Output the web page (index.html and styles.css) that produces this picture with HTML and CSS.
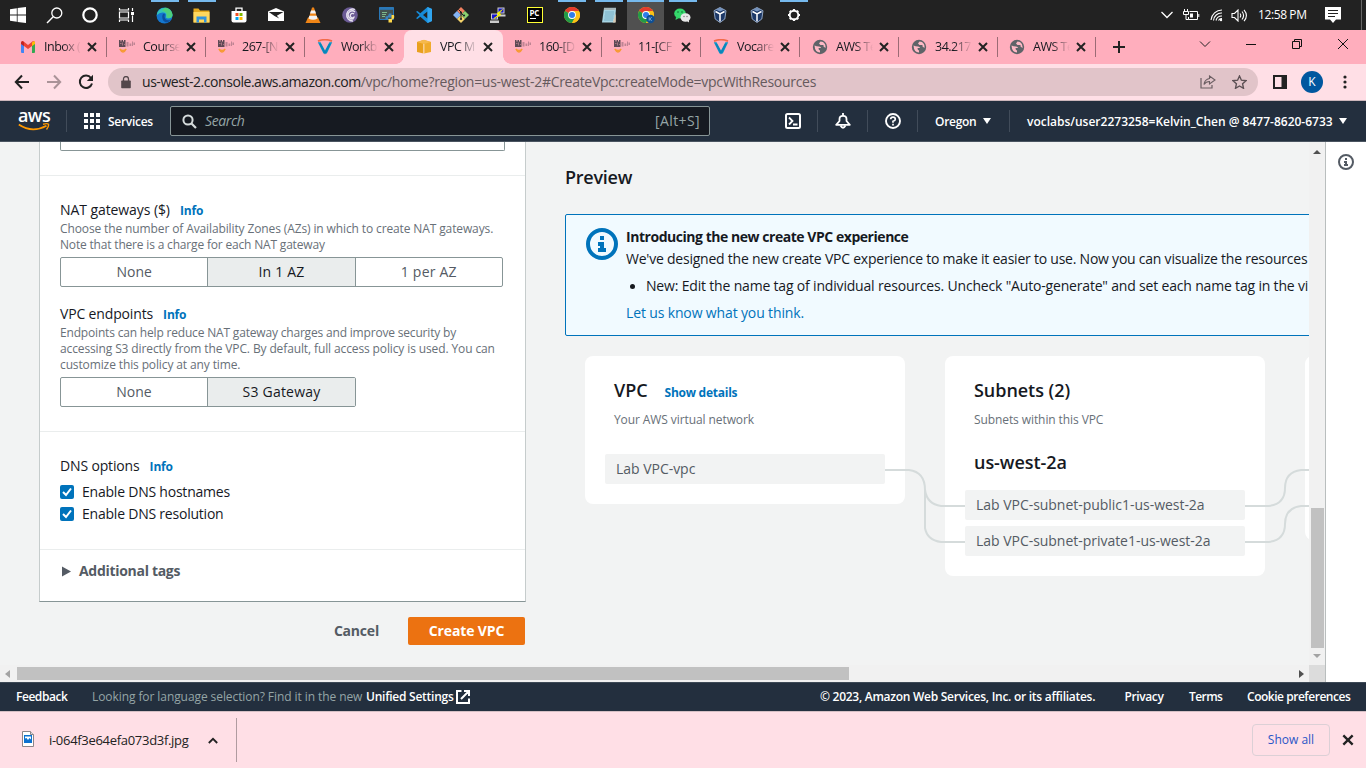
FILE: index.html
```html
<!DOCTYPE html>
<html lang="en">
<head>
<meta charset="utf-8">
<title>Create VPC</title>
<link rel="stylesheet" href="styles.css">
</head>
<body>
<svg class="defs" width="0" height="0">
  <symbol id="close" viewBox="0 0 12 12"><path d="M2 2l8 8M10 2l-8 8" stroke="currentColor" stroke-width="2" fill="none"/></symbol>
  <symbol id="canvas" viewBox="0 0 16 16"><path d="M0 1h1.500v1.500h1V1H4v1.500h1V1h1.500v7H0z" fill="#5e4a55"/><path d="M1 4.500h1.500M3.500 3.500v3M5 5.500h1.500" stroke="#b07a88" stroke-width=".9"/><path d="M7.500 3h2v4.500h-2zM10.500 4.500h1.800v2.500h-1.800zM13 2.500h1v4.500h-1zM14.500 3.500h1.500V6h-1.500z" fill="#a97585" opacity=".75"/><path d="M.8 10q3.200 6.500 6.400 0-3 3-6.400 0z" fill="#f79a35" stroke="#f79a35" stroke-width="1.200"/></symbol>
  <symbol id="voc" viewBox="0 0 16 16"><path d="M.8 3.200h2.800L8 11.500l4.400-8.300h2.800L9.800 14.500H6.500z" fill="#0a94c8"/><path d="M3.200 5L8 14l4.800-9" fill="none" stroke="#0a84b8" stroke-width="1.500"/><path d="M1 2.200Q8-.8 15 2.200" fill="none" stroke="#f36a4a" stroke-width="1.800"/></symbol>
  <symbol id="globe" viewBox="0 0 16 16"><circle cx="8" cy="8" r="7.200" fill="#5f6368"/><path d="M2.500 6.500q2 1 4.500 1 2 0 2 1.500H6.500q0 2 1.500 2.500v2Q3 13.500 2.500 6.500zM8.500 2.500L7 4.500l1.500 1.500h3v1.500l2 1.500q.5-4-2.500-6z" fill="#ffb8c5"/></symbol>
  <symbol id="chrome" viewBox="0 0 16 16"><circle cx="8" cy="8" r="8" fill="#fbc116"/><path d="M8 8L1.070 4A8 8 0 0 1 14.930 4z" fill="#e33b2e"/><path d="M8 8L1.070 4A8 8 0 0 0 8 16l3.400-6z" fill="#229a48"/><path d="M8 4h6.930A8 8 0 0 1 8 16l3.400-6z" fill="#fbc116"/><circle cx="8" cy="8" r="3.900" fill="#fff"/><circle cx="8" cy="8" r="3" fill="#2f7de9"/></symbol>
  <symbol id="vbox" viewBox="0 0 16 16"><path d="M8 .5l6 3.200L12.800 12 8 15.500 3.200 12 2 3.700z" fill="#1d3968" stroke="#8fa5c4" stroke-width="1"/><path d="M3.500 4.500L8 7l4.500-2.500M8 7v7.500" stroke="#fff" stroke-width="1.500" fill="none"/><path d="M4 2.800l4-2 4 2-4 1.700z" fill="#7694be"/></symbol>
  <symbol id="info" viewBox="0 0 32 32"><circle cx="16" cy="16" r="14" fill="none" stroke="currentColor" stroke-width="4"/><path d="M14 8h4v4h-4zM12 14h6v6h2v4h-8v-4h2v-2h-2z" fill="currentColor"/></symbol>
</svg>

<div class="taskbar">
  <div class="tb"><svg width="16" height="16" viewBox="0 0 16 16"><path d="M0 2.200L6.800 1.200V7.500H0zM7.600 1.100L16 0v7.500H7.600zM0 8.400h6.800v6.400L0 13.800zM7.600 8.400H16V16l-8.400-1.100z" fill="#fff"/></svg></div>
  <div class="tb"><svg width="17" height="17" viewBox="0 0 17 17"><circle cx="10.800" cy="6" r="5" fill="none" stroke="#fff" stroke-width="1.300"/><path d="M7.200 9.700L1 16" stroke="#fff" stroke-width="1.400"/></svg></div>
  <div class="tb"><svg width="16" height="16" viewBox="0 0 16 16"><circle cx="8" cy="8" r="6.700" fill="none" stroke="#fff" stroke-width="2.200"/></svg></div>
  <div class="tb"><svg width="17" height="16" viewBox="0 0 17 16"><path d="M1.500 1v2h9V1M1.500 15v-2h9v2M1.500 5h9v6h-9zM14.500 1v3M14.500 8.500V15" fill="none" stroke="#fff" stroke-width="1.200"/><path d="M13 5h3v3h-3z" fill="#fff"/></svg></div>
  <div class="app first on"><svg width="17" height="17" viewBox="0 0 17 17"><circle cx="8.500" cy="8.500" r="8" fill="#1477cf"/><path d="M1 6.500A8 8 0 0 1 16.500 7.500q.3 4-4.500 4-3.200-.3-2-2.300.8-3.700-3.500-3.700Q3 5.500 1 8z" fill="#35c5b5"/><path d="M9 .5a8 8 0 0 1 7.500 7q0 3.500-4 3.500-2-.2-1.800-1.300 1-5-4.500-6z" fill="#56d26a" opacity=".75"/><path d="M6.200 9.500q0 5.500 5 6 2-.5 3.800-2.800-6 2-6.500-3.500 1-2-.5-2.700-1.800.5-1.800 3z" fill="#0c4f9e"/></svg></div>
  <div class="app on"><svg width="17" height="15" viewBox="0 0 17 15"><path d="M.5.500h5l1.500 2h9.500v12H.5z" fill="#e5a91e"/><path d="M.5 4h16v10.500H.5z" fill="#ffd75e"/><path d="M3.500 14.500v-6h10v6H11v-3H6v3z" fill="#3293dc"/></svg></div>
  <div class="app"><svg width="16" height="16" viewBox="0 0 16 16"><path d="M5 4V1.200h6V4" fill="none" stroke="#fff" stroke-width="1.300"/><path d="M.5 4h15v9.500q0 2-2 2h-11q-2 0-2-2z" fill="#fff"/><path d="M4.500 6h3v3h-3z" fill="#f25022"/><path d="M8.500 6h3v3h-3z" fill="#7fba00"/><path d="M4.500 10h3v3h-3z" fill="#00a4ef"/><path d="M8.500 10h3v3h-3z" fill="#ffb900"/></svg></div>
  <div class="app"><svg width="16" height="14" viewBox="0 0 16 14"><path d="M0 3.500L8 0l8 3.500V13H0z" fill="#fff"/><path d="M.8 4h14.700L8.800 7.800l2.500 2.700L6.500 8z" fill="#222"/></svg></div>
  <div class="app"><svg width="16" height="17" viewBox="0 0 16 17"><path d="M3 10.500h10L15.500 16H.5z" fill="#f08516"/><path d="M7 .5h2L12.500 12q-4.500 3-9 0z" fill="#f08516"/><path d="M6 3.500h4l1 3H5zM4.300 8.800h7.400l.8 2.700q-4.500 2.500-9 0z" fill="#f3f3f3"/></svg></div>
  <div class="app"><svg width="16" height="16" viewBox="0 0 16 16"><circle cx="8" cy="8" r="7.800" fill="#6b5b95"/><path d="M13 2.500A6 6 0 1 0 11 14M13 5a4 4 0 1 0-1 6.500M12 7a2.200 2.200 0 1 0 .5 2.500" fill="none" stroke="#e8e4f0" stroke-width="1.300"/></svg></div>
  <div class="app"><svg width="16" height="16" viewBox="0 0 16 16"><path d="M.5.500h14v12H.5z" fill="#44514f" stroke="#2a78b8"/><path d="M.5.500h14v2.300H.5z" fill="#2a78b8"/><path d="M3 5.500h5M3 7.500h4M3 9.500h3" stroke="#7db88a"/><path d="M10 6.500h2.500v4H9v2H6.500v-3L9 9z" fill="#3b82bd"/><path d="M12.500 8h2.500q1 4-2 4.500v3h-3.500V12h3z" fill="#ffd94a"/></svg></div>
  <div class="app"><svg width="16" height="16" viewBox="0 0 16 16"><path d="M11.500 0L16 2v12l-4.500 2L4.300 9.700 1.500 12 0 11.200 3.500 8 0 4.800 1.500 4l2.800 2.300zM11.500 4.500L7 8l4.500 3.500z" fill="#168bd8"/><path d="M11.500 0L16 2v12l-4.500 2z" fill="#30a5ef"/></svg></div>
  <div class="app"><svg width="16" height="16" viewBox="0 0 16 16"><path d="M8 0l4 4-4 4-4-4z" fill="#f08060"/><path d="M4 4l4 4-4 4-4-4z" fill="#85b4f4"/><path d="M12 4l4 4-4 4-4-4z" fill="#8bd070"/><path d="M8 8l4 4-4 4-4-4z" fill="#f5d36a"/><path d="M5.500 2.500L8 5v7M8 6l3 3" stroke="#222" fill="none"/><circle cx="8" cy="5.500" r="1.100" fill="#222"/><circle cx="8" cy="12" r="1.100" fill="#222"/><circle cx="11" cy="8.500" r="1.100" fill="#222"/></svg></div>
  <div class="app"><svg width="16" height="16" viewBox="0 0 16 16"><path d="M7.500.5h7v6h-7zM6.500 7.500h9v2h-9z" fill="#d0d0d0"/><path d="M8.500 1.500h5v4h-5z" fill="#1616d0"/><path d="M1 6.500h7v6H1zM0 13.500h9V16H0z" fill="#ccc"/><path d="M2 7.500h5v4H2z" fill="#1616d0"/><path d="M12.500 2.500L7 6.500l2 1L4 11.500l7-4-2-1z" fill="#ff0" stroke="#ee0" stroke-width=".8"/></svg></div>
  <div class="app"><span class="pc">PC</span></div>
  <div class="app on"><svg width="16" height="16"><use href="#chrome"/></svg></div>
  <div class="app on"><svg width="16" height="16" viewBox="0 0 16 16"><path d="M3 1h12l-1 14.500H1z" fill="#a7d5e4"/><path d="M3 1h12v2H3z" fill="#dcebef"/><path d="M4 5h9M4 7h9M3.500 9h9M3.500 11h9M3 13h9" stroke="#6ba6be" stroke-width=".8"/><path d="M4 0v3M6 0v3M8 0v3M10 0v3M12 0v3M14 0v3" stroke="#65777e" stroke-width=".9"/><path d="M14.800 6v9.500h-3z" fill="#d8c9b4"/></svg></div>
  <div class="app on active"><svg width="18" height="17" viewBox="0 0 18 17"><use href="#chrome" x="1" y="0" width="16" height="16"/><circle cx="13.500" cy="12" r="4.200" fill="#0e4f94"/><path d="M12.200 10.300v3.400M14.700 10.300L12.700 12l2 1.700" stroke="#9cc3e8" fill="none" stroke-width=".8"/></svg></div>
  <div class="app on"><svg width="17" height="16" viewBox="0 0 17 16"><ellipse cx="6" cy="6.500" rx="5.800" ry="5" fill="#35d86b"/><path d="M2 10l-.5 3L5 11z" fill="#35d86b"/><ellipse cx="11.500" cy="10.500" rx="5" ry="4.200" fill="#e8e8e8"/><path d="M13 14l2 1.500V13z" fill="#e8e8e8"/><circle cx="4" cy="5" r=".8" fill="#116b35"/><circle cx="8" cy="5" r=".8" fill="#116b35"/><circle cx="10" cy="9.500" r=".7" fill="#777"/><circle cx="13" cy="9.500" r=".7" fill="#777"/></svg></div>
  <div class="app"><svg width="16" height="16"><use href="#vbox"/></svg></div>
  <div class="app"><svg width="16" height="16"><use href="#vbox"/></svg></div>
  <div class="app on"><svg width="14" height="14" viewBox="0 0 14 14"><circle cx="7" cy="7" r="4.300" fill="none" stroke="#fff" stroke-width="1.900"/><path d="M7 1v1.500M7 11.500V13M1 7h1.500M11.500 7H13M2.800 2.800l1 1M10.200 10.200l1 1M11.200 2.800l-1 1M3.800 10.200l-1 1" stroke="#fff" stroke-width="2.200"/></svg></div>
  <div class="tray">
    <svg class="t-chev" width="12" height="8" viewBox="0 0 12 8"><path d="M.5 1L6 6.500 11.500 1" fill="none" stroke="#fff" stroke-width="1.300"/></svg>
    <svg class="t-bat" width="17" height="12" viewBox="0 0 17 12"><path d="M6.500 2.500h8v8h-9V8M15.800 5v3M1.500 0v2M4.500 0v2M.5 2.500h5v3h-5zM3 5.500v5h2.500" fill="none" stroke="#fff"/><path d="M7 4.500h3v4H7z" fill="#fff"/></svg>
    <svg class="t-wifi" width="13" height="14" viewBox="0 0 13 14"><path d="M1 12A11 11 0 0 1 12 2M3.500 12.500A8 8 0 0 1 12 5M6 12.500A6 6 0 0 1 12 8M8.500 12.500A3.500 3.500 0 0 1 12 10.500" fill="none" stroke="#fff" stroke-width="1.100"/><circle cx="11" cy="12" r="1.200" fill="#fff"/></svg>
    <svg class="t-vol" width="17" height="13" viewBox="0 0 17 13"><path d="M1 4.500h2.500L7 1v11L3.500 8.500H1zM9 4.500q1.500 2 0 4M11 2.500q3.200 4 0 8M13 .8q4.800 5.700 0 11.400" fill="none" stroke="#fff" stroke-width="1.100"/></svg>
    <span class="clock">12:58 PM</span>
    <svg class="t-note" width="16" height="16" viewBox="0 0 16 16"><path d="M0 0h16v12.500h-5L8 16l-3-3.500H0z" fill="#fff"/><path d="M3 3.500h10M3 6.500h10M3 9.500h7" stroke="#222"/></svg>
    <i class="t-line"></i>
  </div>
</div>

<div class="tabs">
  <div class="tab"><svg class="fav" viewBox="0 0 16 16"><path d="M1 3.500h3V14H2q-1 0-1-1z" fill="#4285f4"/><path d="M12 3.500h3V13q0 1-1 1h-2z" fill="#34a853"/><path d="M1 4q0-2 2-2l5 4 5-4q2 0 2 2l-3 3-4 3-4-3z" fill="#ea4335"/><path d="M12 3.500l2-1.500q1.500.5 1 3l-3 2z" fill="#fbbc04"/><path d="M1 4.200Q1 2.500 2.500 2L4 3.500V7L1 5z" fill="#c5221f"/></svg><span class="tt">Inbox (</span><svg class="x"><use href="#close"/></svg></div>
  <div class="tab"><svg class="fav"><use href="#canvas"/></svg><span class="tt">Course</span><svg class="x"><use href="#close"/></svg></div>
  <div class="tab"><svg class="fav"><use href="#canvas"/></svg><span class="tt">267-[N</span><svg class="x"><use href="#close"/></svg></div>
  <div class="tab nosep"><svg class="fav"><use href="#voc"/></svg><span class="tt">Workb</span><svg class="x"><use href="#close"/></svg></div>
  <div class="tab nosep current"><svg class="fav" viewBox="0 0 16 16"><path d="M1 3l6.500-2v13.500L1 13z" fill="#e9a01e"/><path d="M8 1L15 3v10l-7 1.500z" fill="#f0ab2c"/><path d="M1 3l7-2.200L15 3 8 5z" fill="#f6b94c"/><path d="M8 5v9.500" stroke="#ffe1b0" stroke-width=".8"/></svg><span class="tt">VPC M</span><svg class="x"><use href="#close"/></svg></div>
  <div class="tab"><svg class="fav"><use href="#canvas"/></svg><span class="tt">160-[D</span><svg class="x"><use href="#close"/></svg></div>
  <div class="tab"><svg class="fav"><use href="#canvas"/></svg><span class="tt">11-[CF</span><svg class="x"><use href="#close"/></svg></div>
  <div class="tab"><svg class="fav"><use href="#voc"/></svg><span class="tt">Vocare</span><svg class="x"><use href="#close"/></svg></div>
  <div class="tab"><svg class="fav"><use href="#globe"/></svg><span class="tt">AWS Te</span><svg class="x"><use href="#close"/></svg></div>
  <div class="tab"><svg class="fav"><use href="#globe"/></svg><span class="tt">34.217</span><svg class="x"><use href="#close"/></svg></div>
  <div class="tab last"><svg class="fav"><use href="#globe"/></svg><span class="tt">AWS Te</span><svg class="x"><use href="#close"/></svg></div>
  <svg class="plus" width="12" height="12" viewBox="0 0 12 12"><path d="M6 0v12M0 6h12" stroke="#222" stroke-width="2"/></svg>
  <div class="wc">
    <svg viewBox="0 0 12 12"><path d="M1 3.500l5 5 5-5" fill="none" stroke="#222"/></svg>
    <svg viewBox="0 0 12 12"><path d="M1 6.500h10" stroke="#111"/></svg>
    <svg viewBox="0 0 12 12"><path d="M1.500 3.500h7v7h-7zM3.500 3.500v-2h7v7h-2" fill="none" stroke="#111"/></svg>
    <svg viewBox="0 0 12 12"><path d="M1 1l10 10M11 1L1 11" stroke="#111"/></svg>
  </div>
</div>

<div class="toolbar">
  <svg class="nav" viewBox="0 0 16 16"><path d="M15 8H2M8 1.500L1.800 8 8 14.500" fill="none" stroke="#222" stroke-width="2"/></svg>
  <svg class="nav" viewBox="0 0 16 16"><path d="M1 8h13M8 1.500L14.200 8 8 14.500" fill="none" stroke="#aa9398" stroke-width="2"/></svg>
  <svg class="nav" viewBox="0 0 16 16"><path d="M13 4A6.200 6.200 0 1 0 14 9.500" fill="none" stroke="#222" stroke-width="2"/><path d="M15 .8V7H8.800z" fill="#222"/></svg>
  <div class="omni">
    <svg width="10" height="13" viewBox="0 0 10 13"><path d="M1 4.500h8q.8 0 .8.800v6.200q0 .8-.8.800H1q-.8 0-.8-.8V5.300q0-.8.800-.8z" fill="#54474b"/><path d="M2.500 5V3a2.500 2.500 0 0 1 5 0v2" fill="none" stroke="#54474b" stroke-width="1.300"/></svg>
    <span class="host">us-west-2.console.aws.amazon.com</span><span class="path">/vpc/home?region=us-west-2#CreateVpc:createMode=vpcWithResources</span>
    <svg class="share" width="16" height="14" viewBox="0 0 16 14"><path d="M1 3v10h11v-3" fill="none" stroke="#6b5e62" stroke-width="1.200"/><path d="M9.500 1l5.500 4-5.500 4V6.500Q6 6.500 4 9.500q.5-5 5.500-6z" fill="none" stroke="#6b5e62" stroke-width="1.100"/></svg>
    <svg width="15" height="14" viewBox="0 0 15 14"><path d="M7.500 1l1.900 4.200 4.600.5-3.400 3.100.9 4.500-4-2.300-4 2.300.9-4.500L1 5.700l4.600-.5z" fill="none" stroke="#5c5054" stroke-width="1.400"/></svg>
  </div>
  <svg class="side" width="14" height="14" viewBox="0 0 14 14"><path d="M1 1h12v12H1z" fill="none" stroke="#222" stroke-width="2"/><path d="M8.500 1H13v12H8.500z" fill="#222"/></svg>
  <span class="avatar">K</span>
  <svg class="dots" width="4" height="14" viewBox="0 0 4 14"><circle cx="2" cy="2" r="1.600"/><circle cx="2" cy="7" r="1.600"/><circle cx="2" cy="12" r="1.600"/></svg>
</div>

<header class="aws">
  <div class="logo"><span>aws</span><svg width="32" height="9" viewBox="0 0 32 9"><path d="M.8 1.500Q14 10.500 28.500 2.700" fill="none" stroke="#f90" stroke-width="1.700"/><path d="M25 1.200q4.500-1 5.500 0 .5 2.300-2 5.300" fill="none" stroke="#f90" stroke-width="1.400"/></svg></div>
  <i class="vsep"></i>
  <svg class="grid" width="16" height="16" viewBox="0 0 16 16"><path d="M0 0h4v4H0zM6 0h4v4H6zM12 0h4v4h-4zM0 6h4v4H0zM6 6h4v4H6zM12 6h4v4h-4zM0 12h4v4H0zM6 12h4v4H6zM12 12h4v4h-4z" fill="#fff"/></svg>
  <span class="hb svc">Services</span>
  <div class="search"><svg width="15" height="15" viewBox="0 0 15 15"><circle cx="6" cy="6" r="4.600" fill="none" stroke="#d5dbdb" stroke-width="2"/><path d="M9.500 9.500L14 14" stroke="#d5dbdb" stroke-width="2.200"/></svg><em>Search</em><span>[Alt+S]</span></div>
  <svg class="h1" width="16" height="16" viewBox="0 0 16 16"><rect x="1" y="1" width="14" height="14" rx="1.500" fill="none" stroke="#fff" stroke-width="2"/><path d="M4 4.500L7.500 8 4 11.500M8 11.500h4.500" fill="none" stroke="#fff" stroke-width="1.800"/></svg>
  <i class="vsep v1"></i>
  <svg class="h2" width="16" height="16" viewBox="0 0 16 16"><path d="M1.200 11.800h13.600L11.500 8V6Q11.500 2.800 8 2.800T4.500 6v2z" fill="none" stroke="#fff" stroke-width="1.800" stroke-linejoin="round"/><path d="M8 0v3M5.500 12.500q2.500 4.500 5 0" fill="none" stroke="#fff" stroke-width="1.800"/></svg>
  <i class="vsep v2"></i>
  <svg class="h3" width="16" height="16" viewBox="0 0 16 16"><circle cx="8" cy="8" r="7" fill="none" stroke="#fff" stroke-width="1.900"/><path d="M5.700 6.300q0-2.200 2.300-2.200t2.300 2.100Q10.300 7.700 8 8.300v1.500M8 10.800v1.700" fill="none" stroke="#fff" stroke-width="1.700"/></svg>
  <i class="vsep v3"></i>
  <span class="hb ore">Oregon</span><i class="caret"></i>
  <i class="vsep v4"></i>
  <span class="hb usr">voclabs/user2273258=Kelvin_Chen @ 8477-8620-6733</span><i class="caret c2"></i>
</header>

<div class="work">
  <div class="scroller">
    <div class="view">
      <section class="left">
        <div class="panel">
          <div class="input"></div>
          <div class="sec s1">
            <div class="lab"><span class="l-nat">NAT gateways ($)</span><a>Info</a></div>
            <p class="d"><span class="d1">Choose the number of Availability Zones (AZs) in which to create NAT gateways.</span><span class="d2">Note that there is a charge for each NAT gateway</span></p>
            <div class="seg"><b>None</b><b class="sel k1">In 1 AZ</b><b class="k2">1 per AZ</b></div>
            <div class="lab l2"><span>VPC endpoints</span><a>Info</a></div>
            <p class="d"><span class="d2">Endpoints can help reduce NAT gateway charges and improve security by</span><span class="d1">accessing S3 directly from the VPC. By default, full access policy is used. You can</span><span class="d1">customize this policy at any time.</span></p>
            <div class="seg two"><b>None</b><b class="sel k1">S3 Gateway</b></div>
          </div>
          <div class="sec s2">
            <div class="lab"><span>DNS options</span><a>Info</a></div>
            <div class="chk"><svg viewBox="0 0 14 14"><path d="M3 7l3 3 5-6.500" fill="none" stroke="#fff" stroke-width="2"/></svg>Enable DNS hostnames</div>
            <div class="chk"><svg viewBox="0 0 14 14"><path d="M3 7l3 3 5-6.500" fill="none" stroke="#fff" stroke-width="2"/></svg>Enable DNS resolution</div>
          </div>
          <div class="sec s3"><svg width="9" height="11" viewBox="0 0 9 11"><path d="M0 .5l9 5-9 5z" fill="#545b64"/></svg>Additional tags</div>
        </div>
        <div class="actions"><span class="cancel">Cancel</span><span class="create">Create VPC</span></div>
      </section>
      <section class="right">
        <h2>Preview</h2>
        <div class="alert">
          <svg width="32" height="32"><use href="#info"/></svg>
          <div class="at">
            <strong>Introducing the new create VPC experience</strong>
            <span class="a1">We've designed the new create VPC experience to make it easier to use. Now you can visualize the resources</span>
            <span class="a2">New: Edit the name tag of individual resources. Uncheck "Auto-generate" and set each name tag in the vi</span>
            <span class="a3">Let us know what you think.</span>
          </div>
        </div>
        <div class="map">
          <div class="card">
            <div class="ct">VPC<a>Show details</a></div>
            <div class="cs">Your AWS virtual network</div>
            <div class="chip top">Lab VPC-vpc</div>
          </div>
          <div class="card">
            <div class="ct">Subnets (2)</div>
            <div class="cs s">Subnets within this VPC</div>
            <div class="ct az">us-west-2a</div>
            <div class="chip">Lab VPC-subnet-public1-us-west-2a</div>
            <div class="chip">Lab VPC-subnet-private1-us-west-2a</div>
          </div>
          <div class="card third"></div>
          <svg class="wires" width="724" height="220" viewBox="0 0 724 220"><path d="M300 114h24q16 2 16 20v38q2 12 16 14h24M340 134q2 14 16 16h24M660 150h24q16-2 16-18t16-18h10M660 186h24q16-2 16-18t16-18h10" fill="none" stroke="#d5dbdb" stroke-width="2"/></svg>
        </div>
      </section>
    </div>
    <div class="vbar"><i class="up"></i><i class="vthumb"></i><i class="down"></i></div>
    <div class="hbar"><i class="lt"></i><i class="hthumb"></i><i class="rt"></i></div>
    <div class="corner"></div>
  </div>
  <aside><svg width="16" height="16"><use href="#info"/></svg></aside>
</div>

<footer>
  <span class="f1">Feedback</span><span class="f2">Looking for language selection? Find it in the new</span><span class="f3">Unified Settings</span>
  <svg width="14" height="14" viewBox="0 0 14 14"><path d="M5.500 1H1v12h12V8.500M8 1h5v5M12.500 1.500L5 9" fill="none" stroke="#fff" stroke-width="2"/></svg>
  <span class="f4">© 2023, Amazon Web Services, Inc. or its affiliates.</span><span class="f5">Privacy</span><span class="f6">Terms</span><span class="f7">Cookie preferences</span>
</footer>

<div class="dl">
  <svg class="file" width="12" height="16" viewBox="0 0 12 16"><path d="M.5.500h8l3 3v12H.5z" fill="#fff" stroke="#8d8588"/><path d="M8.500.500v3h3" fill="#ddd" stroke="#8d8588"/><path d="M2 4h8v8H2z" fill="#0d72d0"/><path d="M3 5.500h6v3L7.500 7 6 9 4.500 7 3 7.500z" fill="#fff"/></svg>
  <span class="fn">i-064f3e64efa073d3f.jpg</span>
  <svg class="dc" width="10" height="7" viewBox="0 0 10 7"><path d="M.8 6L5 1.800 9.200 6" fill="none" stroke="#222" stroke-width="1.800"/></svg>
  <i class="dsep"></i>
  <span class="all">Show all</span>
  <svg class="dx" width="14" height="14"><use href="#close"/></svg>
</div>
</body>
</html>
```
FILE: styles.css
```css
*{box-sizing:border-box}
body{margin:0;width:1366px;height:768px;overflow:hidden;font:14px/22px "Open Sans","Noto Sans",sans-serif;color:#16191f;white-space:nowrap;background:#f2f3f3}
svg{display:block;flex:none}
i{display:block;flex:none}
.defs{position:absolute}

/* taskbar */
.taskbar{height:30px;background:#222;display:flex}
.tb,.app{width:36px;height:30px;display:flex;align-items:center;justify-content:center;flex:none}
.app{width:37px;background:linear-gradient(#76b9ed,#76b9ed) 50% 0/0 2px no-repeat}
.first{margin-left:2px}
.on{background-size:28px 2px}
.active{background-color:#505050;background-size:37px 2px}
.pc{width:16px;height:16px;border:1px solid #ff3;background:#000;color:#fff;font:700 8px/9px "Open Sans",sans-serif;padding-left:2px;letter-spacing:-.3px}
.pc::after{content:"";display:block;width:6px;height:1px;background:#fff;margin-top:1px}
.tray{margin-left:auto;display:flex;align-items:center;color:#fff}
.t-bat{margin-left:10px}
.t-wifi{margin-left:10px}
.t-vol{margin-left:8px}
.clock{margin-left:10px;width:49px;font-size:12px;letter-spacing:-.4px}
.t-note{margin-left:18px}
.t-line{margin:0 4px 0 20px;width:1px;height:30px;background:#666}

/* tab strip */
.tabs{height:34px;background:#ffaebd;display:flex;padding-left:8px}
.tab{position:relative;width:99px;height:34px;display:flex;align-items:center;padding-left:12px;flex:none}
.tab::after{content:"";position:absolute;right:0;top:7px;width:1px;height:20px;background:#9b6b75}
.nosep::after{display:none}
.last{width:98px;padding-left:11px}
.current{background:#ffdfe6;border-radius:8px 8px 0 0}
.current::after{display:block;right:-8px;top:26px;width:8px;height:8px;background:radial-gradient(circle at 8px 0,transparent 7.500px,#ffdfe6 8px)}
.current::before{content:"";position:absolute;left:-8px;top:26px;width:8px;height:8px;background:radial-gradient(circle at 0 0,transparent 7.500px,#ffdfe6 8px)}
.fav{width:16px;height:16px}
.tt{margin-left:8px;width:37px;overflow:hidden;font-size:12.500px;letter-spacing:-.5px;line-height:20px;-webkit-mask-image:linear-gradient(90deg,#000 50%,transparent);mask-image:linear-gradient(90deg,#000 50%,transparent)}
.x{width:12px;height:12px;margin-left:5px;color:#222}
.plus{margin:11px 0 0 17px}
.wc{display:flex;gap:34px;margin:8px 17px 0 auto}
.wc svg{width:12px;height:12px}

/* toolbar */
.toolbar{height:37px;background:#ffdfe6;border-bottom:1px solid #cdb7bc;display:flex;align-items:center;padding-left:14px}
.nav{width:16px;height:16px;margin-right:16px}
.omni{margin-left:-2px;width:1150px;height:28px;border-radius:14px;background:#e1c4c9;display:flex;align-items:center;padding:0 11px 0 13px}
.host{margin-left:11px;letter-spacing:-.45px;font-size:14px;color:#222}
.path{color:#665a5d;letter-spacing:-.29px}
.share{margin:0 16px 0 auto}
.side{margin-left:15px}
.avatar{margin-left:14px;width:22px;height:22px;border-radius:11px;background:#00579f;color:#fff;font-size:12px;text-align:center}
.dots{margin-left:20px;fill:#222}

/* console header */
.aws{height:41px;background:#232f3e;border-bottom:1px solid #4a5460;display:flex;align-items:center;color:#fff}
.logo{margin-left:18px;width:32px;height:24px}
.logo span{display:block;font:600 18px/14px "Open Sans",sans-serif;letter-spacing:-.6px;margin-top:-1px;height:15px;text-align:center}
.vsep{width:1px;height:22px;background:#414c5a}
.logo+.vsep{margin-left:16px}
.grid{margin-left:17px}
.hb{font-size:12px;font-weight:600;padding-top:1px}
.svc{margin-left:8px;width:62px;letter-spacing:-.28px}
.search{width:540px;height:30px;border:1px solid #879596;background:#161a21;border-radius:2px;display:flex;align-items:center;padding:0 9px 0 11px;color:#95a5a6;font-size:14px}
.search em{margin-left:8px;letter-spacing:-.39px}
.search span{margin-left:auto;letter-spacing:.4px}
.h1{margin-left:75px}
.v1{margin-left:16px}
.h2{margin-left:17px}
.v2{margin-left:16px}
.h3{margin-left:17px}
.v3{margin-left:16px}
.ore{margin-left:17px;width:48px;letter-spacing:-.3px}
.caret{border:4px solid transparent;border-top:6px solid #fff;border-bottom:0}
.v4{margin-left:18px}
.usr{margin-left:17px;width:312px}

/* work area */
.work{display:flex;height:540px}
.scroller{width:1325px;height:540px;display:grid;grid-template-columns:1309px 16px;grid-template-rows:523px 17px;flex:none}
.view{overflow:hidden;display:flex;background:#f2f3f3}
.left{width:487px;margin-left:39px;flex:none}
.panel{height:460px;background:#fff;border:1px solid #c6cccc;border-top:0;border-bottom-color:#879596}
.input{height:9px;width:445px;margin-left:20px;border:1px solid #879596;border-top:0;border-radius:0 0 2px 2px}
.sec{border-top:1px solid #eaeded;padding:23px 20px 0}
.s1{margin-top:24px;height:256px}
.s2{height:118px}
.lab{display:flex;line-height:22px;letter-spacing:-.15px}
.lab a{margin-left:10px;color:#0073bb;font-size:12px;font-weight:700;padding-top:1px;height:22px}
.l-nat{letter-spacing:-.08px}
.d{margin:0;font-size:12px;line-height:16px;color:#687078}
.d span{display:block}
.d1{letter-spacing:-.12px}
.d2{letter-spacing:-.18px}
.seg{display:flex;margin-top:4px;width:443px;height:30px;border:1px solid #879596;border-radius:2px}
.seg b{flex:1;font-weight:400;text-align:center;line-height:28px;color:#545b64}
.seg b+b{border-left:1px solid #879596}
.seg .sel{background:#eaeded;color:#16191f}
.k1,.k2{letter-spacing:.22px}
.two{width:296px}
.seg.two b:first-child{flex:0 0 146px}
.l2{margin-top:16px}
.chk{display:flex;align-items:center;gap:8px;letter-spacing:-.22px}
.s2 .lab{margin-bottom:4px}
.chk svg{width:14px;height:14px;background:#0073bb;border-radius:2px}
.s3{display:flex;align-items:center;gap:8px;padding:10px 22px 0;font-weight:700;color:#545b64;letter-spacing:-.3px}
.actions{display:flex;justify-content:flex-end;margin:15px 1px 0 0;font-weight:700;line-height:28px}
.cancel{color:#545b64;margin-right:29px;letter-spacing:-.2px}
.create{background:#ec7211;color:#fff;width:117px;text-align:center;border-radius:2px;letter-spacing:-.12px}
.right{margin-left:39px;flex:none;width:900px}
h2{margin:24px 0 0;font-size:18px;line-height:22px;font-weight:600;letter-spacing:-.25px}
.alert{margin-top:26px;height:122px;border:1px solid #0073bb;border-radius:2px;background:#f1faff;display:flex;padding:11px 20px;color:#0073bb}
.alert svg{margin-top:2px}
.at{margin-left:8px;color:#16191f}
.at strong,.at span{display:block;line-height:22px}
.at strong{letter-spacing:-.46px}
.a1{letter-spacing:-.23px}
.at .a2{letter-spacing:-.18px;margin:5px 0;padding-left:20px;position:relative}
.a2::before{content:"";position:absolute;left:4px;top:9px;width:5px;height:5px;border-radius:3px;background:#16191f}
.at .a3{color:#0073bb;letter-spacing:-.14px}
.map{position:relative;display:flex;align-items:flex-start;gap:40px;margin:20px 0 0 20px}
.card{width:320px;background:#fff;border-radius:8px;padding:23px 20px 20px;flex:none}
.third{height:184px}
.ct{margin-left:9px;height:22px;font-size:18px;font-weight:600;line-height:22px;letter-spacing:-.05px}
.ct a{color:#0073bb;font-size:12px;font-weight:700;margin-left:17px;letter-spacing:-.25px}
.cs{margin:8px 0 0 9px;font-size:12px;color:#687078;letter-spacing:-.09px}
.az{margin-top:20px;margin-bottom:17px}
.chip{height:30px;line-height:30px;background:#f2f3f3;border-radius:2px;padding-left:11px;color:#545b64;letter-spacing:-.03px}
.chip+.chip{margin-top:6px}
.top{margin-top:23px}
.wires{position:absolute;left:0;top:0}
.vbar{background:#f1f1f1;display:flex;flex-direction:column;align-items:center}
.up{margin-top:8px;border:4px solid transparent;border-bottom:4px solid #505050;border-top:0}
.vthumb{margin-top:354px;width:13px;height:140px;background:#c1c1c1}
.down{margin-top:6px;border:4px solid transparent;border-top:4px solid #a3a3a3;border-bottom:0}
.hbar{background:#f1f1f1;display:flex;align-items:center}
.lt{margin-left:5px;border:4px solid transparent;border-right:5px solid #a3a3a3;border-left:0}
.hthumb{margin-left:7px;width:832px;height:13px;background:#c1c1c1}
.rt{margin-left:450px;border:4px solid transparent;border-left:5px solid #505050;border-right:0}
.corner{background:#dcdcdc}
aside{width:41px;background:#fff;border-left:1px solid #b9bebe;padding:12px 0 0 12px;color:#545b64}

/* console footer */
footer{height:29px;background:#232f3e;border-top:1px solid #3d4956;display:flex;align-items:center;color:#fff;font-size:12px;font-weight:600}
.f1{margin-left:16px;width:76px;letter-spacing:-.45px}
.f2{width:274px;color:#95a5a6;font-weight:400;letter-spacing:-.08px}
.f3{width:90px;letter-spacing:-.25px}
.f4{margin-left:350px;width:304.500px;letter-spacing:-.27px}
.f5{width:64.500px;letter-spacing:-.38px}
.f6{width:58px;letter-spacing:-.55px}
.f7{letter-spacing:-.47px}

/* download shelf */
.dl{height:57px;background:#ffdfe6;border-top:1px solid #d5bfc4;display:flex;align-items:center;color:#222}
.file{margin:0 0 2px 22px}
.fn{margin-left:15px;width:159px;font-size:13px;letter-spacing:-.3px}
.dsep{margin-left:18px;width:1px;height:44px;background:#b09ba0}
.all{margin:0 0 1px 1015px;width:78px;height:32px;border:1px solid #dcd0d6;border-radius:4px;text-align:center;line-height:30px;font-size:12px;color:#2a56c6}
.dx{margin:0 0 1px 11px}
```
